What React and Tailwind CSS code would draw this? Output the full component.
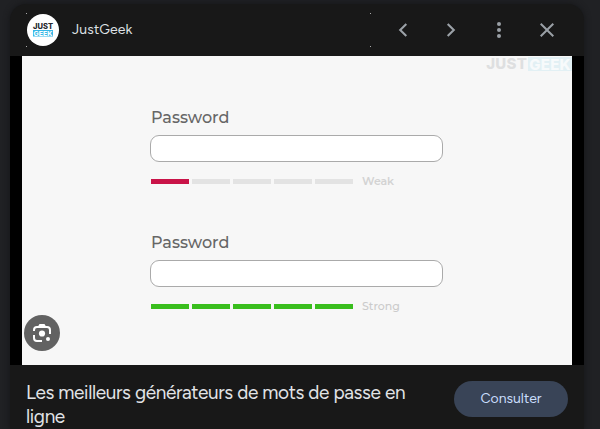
const demos = [
  { bars: ['bg-[#c91348]', 'bg-[#e3e3e3]', 'bg-[#e3e3e3]', 'bg-[#e3e3e3]', 'bg-[#e3e3e3]'], label: 'Weak', labelClass: 'font-semibold tracking-[-0.1px] text-[#d3d3d3]' },
  { bars: ['bg-[#39be1d]', 'bg-[#39be1d]', 'bg-[#39be1d]', 'bg-[#39be1d]', 'bg-[#39be1d]'], label: 'Strong', labelClass: 'font-medium tracking-normal text-[#cbcbcb]' },
];

function PasswordDemo({ bars, label, labelClass }) {
  return (
    <div className="h-[125px] w-[293px]">
      <div className="h-[27px] pl-px text-[16px] leading-[20px] font-medium tracking-normal text-[#666]">Password</div>
      <div className="h-[27px] rounded-[9px] border border-[#aaa] bg-white" />
      <div className="mt-3 flex h-[14px] items-center pl-px">
        <div className="flex gap-[3px]">
          {bars.map((color, i) => (
            <div key={i} className={'h-[5px] w-[38px] ' + color} />
          ))}
        </div>
        <span className={'ml-[9px] text-[11px] leading-[14px] ' + labelClass}>{label}</span>
      </div>
    </div>
  );
}

function Header() {
  return (
    <header className="flex h-[52px] shrink-0 items-center pl-4">
      <div className="flex h-[34px] w-[345px] items-center">
        <div className="flex h-full flex-col justify-between">
          <i className="size-px bg-[#aaa]" />
          <i className="size-px bg-[#aaa]" />
        </div>
        <svg className="size-8 rounded-full bg-white font-[Inter,sans-serif] font-extrabold" viewBox="0 0 32 32">
          <text x="6" y="15.2" fontSize="7.4" textLength="20" lengthAdjust="spacingAndGlyphs" fill="#25272c">JUST</text>
          <rect x="6" y="16" width="20" height="6.5" fill="#36b7e6" />
          <text x="6.6" y="21.6" fontSize="6.6" textLength="18.8" lengthAdjust="spacingAndGlyphs" fill="white">GEEK</text>
        </svg>
        <span className="ml-[13px] grow pb-px text-[14px] leading-5 tracking-[0.12px] text-[#dfe1e5]">JustGeek</span>
        <div className="flex h-full flex-col justify-between">
          <i className="size-px bg-[#aaa]" />
          <i className="size-px bg-[#aaa]" />
        </div>
      </div>
      <div className="ml-5 flex text-[#9aa0a6]">
        <svg className="mr-6 size-6" viewBox="0 0 24 24" fill="none" stroke="currentColor" strokeWidth="2.1"><path d="m15.3 5.9-6.1 6.1 6.1 6.1" /></svg>
        <svg className="mr-6 size-6" viewBox="0 0 24 24" fill="none" stroke="currentColor" strokeWidth="2.1"><path d="m8.7 5.9 6.1 6.1-6.1 6.1" /></svg>
        <svg className="mr-6 size-6" viewBox="0 0 24 24" fill="currentColor"><circle cx="12" cy="6" r="2" /><circle cx="12" cy="12" r="2" /><circle cx="12" cy="18" r="2" /></svg>
        <svg className="size-6" viewBox="0 0 24 24" fill="currentColor"><path d="M19 6.41 17.59 5 12 10.59 6.41 5 5 6.41 10.59 12 5 17.59 6.41 19 12 13.41 17.59 19 19 17.59 13.41 12z" /></svg>
      </div>
    </header>
  );
}

export default function App() {
  return (
    <div className="h-[429px] w-[600px] overflow-hidden bg-[#202124] pt-1 pl-[10px] font-['Google_Sans',Figtree,Inter,sans-serif]">
      <main className="flex h-[425px] w-[574px] flex-col overflow-hidden rounded-t-2xl bg-[#181818] shadow-[0_0_6px_#141517]">
        <Header />
        <section className="h-[309px] shrink-0 bg-black px-3">
          <div className="relative h-full bg-[#f7f7f7] pt-[52px] pl-[128px] font-[Montserrat,Inter,sans-serif]">
            {demos.map((demo) => <PasswordDemo key={demo.label} {...demo} />)}
            <div className="absolute top-0 right-0 flex h-4 items-center font-[Inter,sans-serif] text-[15px] leading-4 font-extrabold">
              <span className="tracking-[0.3px] text-[#dedfe0]">JUST</span>
              <span className="ml-px h-[14px] bg-[#e2f0f4] px-px leading-[15px] tracking-[0.3px] text-[#f7fafb]">GEEK</span>
            </div>
            <div className="absolute top-[259px] left-[2px] flex size-9 items-center justify-center rounded-full bg-[#626262]">
              <svg width="20" height="20" viewBox="0 0 20 20" fill="none" stroke="white" strokeWidth="2">
                <path d="M2 8V7a3 3 0 0 1 3-3h10a3 3 0 0 1 3 3v4M2 12v3a3 3 0 0 0 3 3h5" />
                <path d="M6 3.5 7.5 1h5L14 3.5z" fill="white" stroke="none" />
                <circle cx="10" cy="10.5" r="3.1" fill="white" stroke="none" />
                <circle cx="16" cy="16" r="2" fill="white" stroke="none" />
              </svg>
            </div>
          </div>
        </section>
        <footer className="flex shrink-0 items-start px-4 pt-4">
          <h1 className="w-[412px] text-[19px] leading-6 font-normal tracking-[-0.37px] text-[#e1e3e6]">Les meilleurs générateurs de mots de passe en<br />ligne</h1>
          <button className="ml-4 h-9 w-[114px] rounded-full bg-[#394457] pb-px text-[14px] leading-5 text-[#c9ddfb]">Consulter</button>
        </footer>
      </main>
    </div>
  );
}
